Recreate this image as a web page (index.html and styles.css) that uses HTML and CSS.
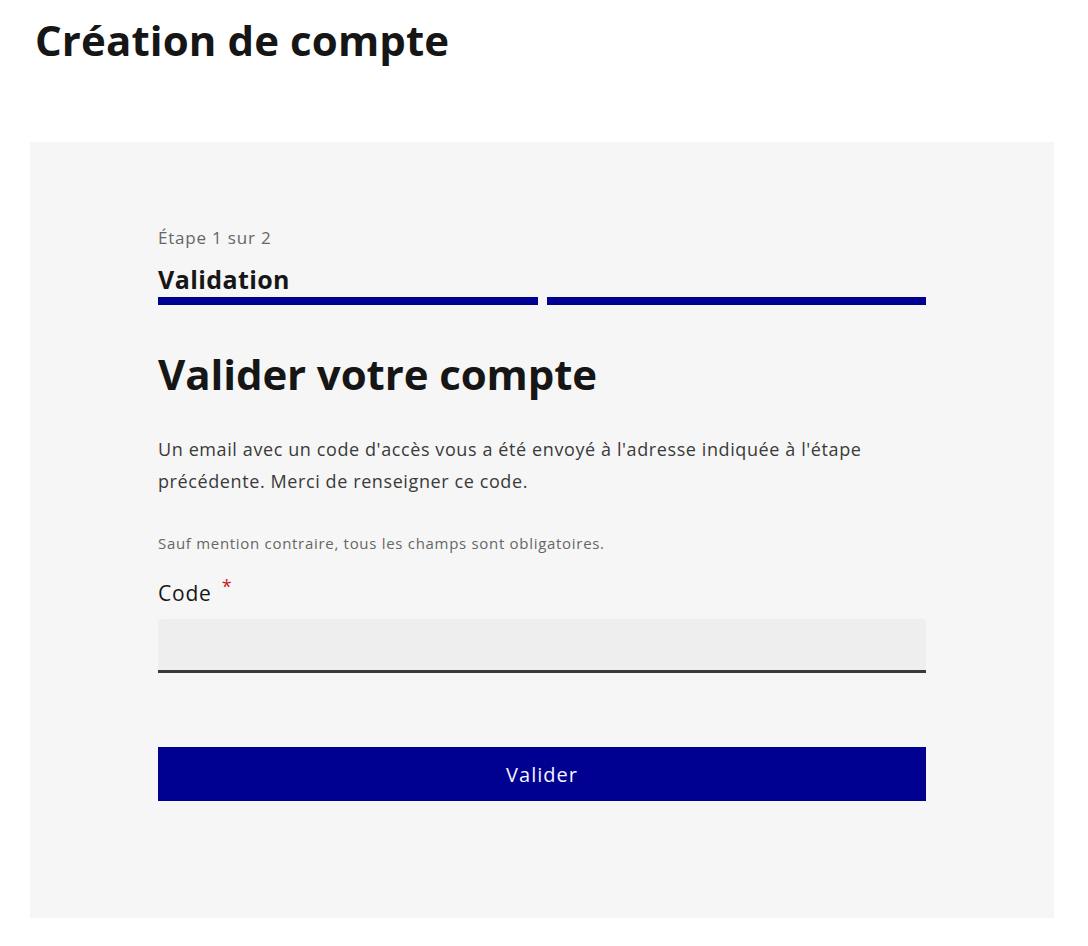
FILE: index.html
```html
<!DOCTYPE html>
<html lang="fr">
<head>
<meta charset="utf-8">
<title>Création de compte</title>
<link rel="stylesheet" href="styles.css">
</head>
<body>
<main class="page">
  <h1 class="page-title">Création de compte</h1>
  <section class="panel">
    <div class="stepper">
      <p class="stepper-state">Étape 1 sur 2</p>
      <h2 class="stepper-title">Validation</h2>
      <div class="stepper-steps">
        <span class="step"></span>
        <span class="step"></span>
      </div>
    </div>
    <h2 class="form-title">Valider votre compte</h2>
    <p class="lead">Un email avec un code d'accès vous a été envoyé à l'adresse indiquée à l'étape précédente. Merci de renseigner ce code.</p>
    <p class="hint">Sauf mention contraire, tous les champs sont obligatoires.</p>
    <form class="form">
      <label class="label" for="code">Code<span class="required">*</span></label>
      <input class="input" id="code" type="text">
      <button class="button" type="button">Valider</button>
    </form>
  </section>
</main>
</body>
</html>
```

FILE: styles.css
```css
* { box-sizing: border-box; }
html, body { margin: 0; padding: 0; background: #fff; }
body {
  font-family: "Open Sans", "Noto Sans", sans-serif;
  color: #161616;
}
.page {
  padding: 0 34px 0 30px;
}
.page-title {
  margin: 16px 0 0 5px;
  font-size: 42px;
  line-height: 48px;
  font-weight: 700;
  letter-spacing: 0.1px;
}
.panel {
  margin-top: 78px;
  background: #f6f6f6;
  padding: 84px 128px 117px;
}
.stepper-state {
  margin: 0;
  font-size: 17px;
  line-height: 24px;
  letter-spacing: 0.8px;
  color: #666;
}
.stepper-title {
  margin: 15px 0 0;
  font-size: 25px;
  line-height: 28px;
  font-weight: 700;
  letter-spacing: 0.4px;
}
.stepper-steps {
  margin-top: 4px;
  display: flex;
  gap: 9px;
}
.step {
  flex: 1;
  height: 8px;
  background: #000091;
}
.form-title {
  margin: 45px 0 0;
  font-size: 42px;
  line-height: 48px;
  font-weight: 700;
  letter-spacing: -0.1px;
}
.lead {
  margin: 35px 0 0;
  font-size: 18px;
  line-height: 32px;
  letter-spacing: 0.6px;
  color: #3a3a3a;
}
.hint {
  margin: 34px 0 0;
  font-size: 15px;
  line-height: 24px;
  letter-spacing: 0.7px;
  color: #666;
}
.form {
  display: flex;
  flex-direction: column;
}
.label {
  margin-top: 24px;
  font-size: 21px;
  line-height: 28px;
  letter-spacing: 0.8px;
  color: #161616;
}
.required {
  margin-left: 10px;
  color: #c9191e;
  font-size: 18px;
  line-height: 0;
  vertical-align: 8px;
}
.input {
  margin-top: 12px;
  height: 54px;
  border: 0;
  border-bottom: 3px solid #3a3a3a;
  border-radius: 4px 4px 0 0;
  background: #eee;
  font: inherit;
}
.button {
  margin-top: 74px;
  height: 54px;
  border: 0;
  background: #000091;
  color: #f5f5fe;
  font-family: inherit;
  font-size: 20px;
  letter-spacing: 1px;
}
```
